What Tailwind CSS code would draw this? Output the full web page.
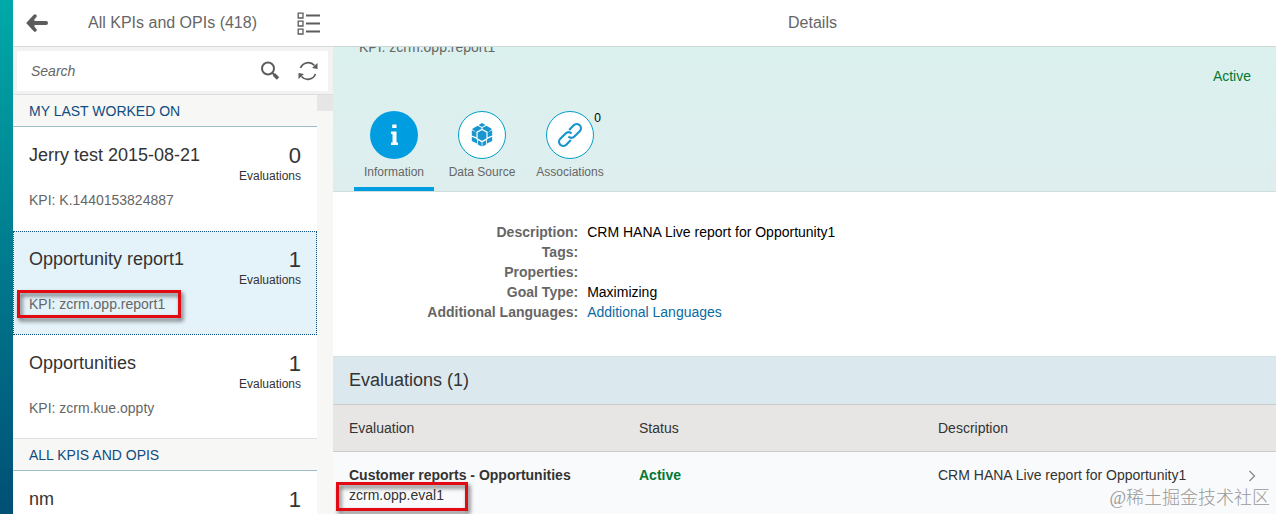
<!DOCTYPE html>
<html lang="en">
<head>
    <meta charset="UTF-8">
    <meta name="viewport" content="width=device-width, initial-scale=1.0">
    <title>KPI Workspace - Details</title>
    <script src="https://cdn.jsdelivr.net/npm/@tailwindcss/browser@4"></script>
</head>
<body class="flex h-screen overflow-hidden bg-linear-to-b from-[#00a9a8] to-[#004f75] pl-[13px] font-['Liberation_Sans',Arial,sans-serif] text-sm leading-5 text-[#333]">

    <!-- Master list -->
    <aside class="flex w-80 shrink-0 flex-col bg-[#f7f7f6]">
        <header class="flex h-[47px] shrink-0 items-center justify-between border-b border-[#d9dcdc] bg-white px-[13px] text-[#666]">
            <button type="button" aria-label="Back">
                <svg class="h-[18px] w-[22px]" viewBox="0 0 22 18" fill="none" stroke="#5c5c5c" stroke-width="4" stroke-linecap="round">
                    <path d="M4 9H20"/>
                    <path d="M9 2L2.500 9L9 16" stroke-width="3.400"/>
                    <path d="M4 9L8 5.500V12.500z" stroke-width="1" fill="#5c5c5c"/>
                </svg>
            </button>
            <h1 class="text-base">All KPIs and OPIs (418)</h1>
            <button type="button" aria-label="Group list">
                <svg class="size-[23px]" viewBox="0 0 23 23" fill="none" stroke="#5c5c5c">
                    <path d="M1.200 1.200h4.800v4.800H1.200zM1.200 9.200h4.800v4.800H1.200zM1.200 17.200h4.800v4.800H1.200z" stroke-width="1.300"/>
                    <path d="M9 3.500H23M9 11.500H23M9 19.500H23" stroke-width="1.800"/>
                </svg>
            </button>
        </header>

        <form class="border-b border-[#dcdcdc] bg-[#f2f2f2] pt-1 pr-[5px] pb-[3px] pl-1">
            <div class="flex h-10 items-center bg-white pr-[10px] pl-[14px]">
                <input type="search" aria-label="Search" placeholder="Search" class="min-w-0 flex-1 outline-none placeholder:text-[#666] placeholder:italic">
                <button type="submit" aria-label="Search">
                    <svg class="size-5" viewBox="0 0 20 20" fill="none" stroke="#5c5c5c">
                        <circle cx="8" cy="7.500" r="6" stroke-width="2"/>
                        <path d="M12.500 12L15 14.500" stroke-width="2"/>
                        <path d="M14 13.500L18 17.500" stroke-width="3.400"/>
                    </svg>
                </button>
                <button type="button" aria-label="Refresh" class="ml-[18px]">
                    <svg class="size-5" viewBox="0 0 20 20" fill="none" stroke="#5c5c5c" stroke-width="1.700">
                        <path d="M2.500 7A8.300 8.300 0 0 1 16.500 4.500M17.500 13A8.300 8.300 0 0 1 3.500 15.500"/>
                        <path d="M19.500 2V8L14 7zM.5 18V12L6 13z" fill="#5c5c5c" stroke="none"/>
                    </svg>
                </button>
            </div>
        </form>

        <div class="flex min-h-0 flex-1">
            <div class="min-w-0 flex-1 overflow-hidden">
                <h2 class="flex h-8 items-center border-b border-[#9dbccd] px-4 text-[#0f4c81]">MY LAST WORKED ON</h2>
                <ul>
                    <li class="flex h-[104px] justify-between bg-white px-4 pt-4">
                        <div>
                            <p class="text-lg leading-6">Jerry test 2015-08-21</p>
                            <p class="mt-[23px] text-[#666]">KPI: K.1440153824887</p>
                        </div>
                        <div class="text-right">
                            <p class="text-[22px] leading-[25px]">0</p>
                            <p class="text-xs leading-4">Evaluations</p>
                        </div>
                    </li>
                    <li class="flex h-[104px] justify-between border border-dotted border-[#0f4c81] bg-[#e4f2f9] px-[15px] pt-[15px]">
                        <div>
                            <p class="text-lg leading-6">Opportunity report1</p>
                            <p class="relative mt-[23px] w-fit text-[#666]">
                                KPI: zcrm.opp.report1
                                <span class="absolute -inset-y-1 -right-4 -left-3 border-3 border-[#e30b13] drop-shadow-[2px_3px_2px_rgba(0,0,0,0.6)]"></span>
                            </p>
                        </div>
                        <div class="text-right">
                            <p class="text-[22px] leading-[25px]">1</p>
                            <p class="text-xs leading-4">Evaluations</p>
                        </div>
                    </li>
                    <li class="flex h-[104px] justify-between border-b border-[#e0e0e0] bg-white px-4 pt-4">
                        <div>
                            <p class="text-lg leading-6">Opportunities</p>
                            <p class="mt-[23px] text-[#666]">KPI: zcrm.kue.oppty</p>
                        </div>
                        <div class="text-right">
                            <p class="text-[22px] leading-[25px]">1</p>
                            <p class="text-xs leading-4">Evaluations</p>
                        </div>
                    </li>
                </ul>
                <h2 class="flex h-8 items-center border-b border-[#9dbccd] px-4 text-[#0f4c81]">ALL KPIS AND OPIS</h2>
                <ul>
                    <li class="flex h-[104px] justify-between bg-white px-4 pt-4">
                        <p class="text-lg leading-6">nm</p>
                        <p class="text-[22px] leading-[25px]">1</p>
                    </li>
                </ul>
            </div>
            <!-- Scrollbar -->
            <div class="w-4 shrink-0">
                <div class="h-4 bg-[#e6e6e6]"></div>
            </div>
        </div>
    </aside>

    <!-- Detail page -->
    <main class="relative flex min-w-0 flex-1 flex-col bg-white">
        <header class="flex h-[47px] shrink-0 items-center justify-center border-b border-[#cfd6d6] pl-4 text-base text-[#666]">
            <h1>Details</h1>
        </header>

        <section class="shrink-0 overflow-hidden border-b border-[#d0dfde] bg-linear-to-b from-[#dbf1ee] to-[#deeeee]">
            <p class="-mt-[10px] pl-[26px] text-[#666]">KPI: zcrm.opp.report1</p>
            <p class="mt-[9px] pr-[25px] text-right text-[#007833]">Active</p>
            <nav class="mt-[25px] flex gap-2 pl-[21px] text-xs leading-4 text-[#666]">
                <a href="#information" class="flex w-20 flex-col items-center border-b-4 border-[#009de0] pb-[7px]">
                    <span class="flex size-12 items-center justify-center rounded-full bg-[#009de0]">
                        <svg class="size-6" viewBox="0 0 24 24" fill="#fff">
                            <path d="M10.200 1.500h4.300v3.600h-4.300zM9 8.500h5.500v11h1.500V22H9v-2.500h1.500v-8.500H9z"/>
                        </svg>
                    </span>
                    <span class="mt-[5px]">Information</span>
                </a>
                <a href="#data-source" class="flex w-20 flex-col items-center pb-[11px]">
                    <span class="flex size-12 items-center justify-center rounded-full border border-[#00a0c6] bg-white">
                        <svg class="size-6" viewBox="0 0 24 24" fill="#1a96cf">
                            <path d="M12 0l3.500 2-3.500 2-3.500-2z"/>
                            <path d="M7.500 2.800l4 2V9L6.500 10 2 6zM16.500 2.800l-4 2V9L17.500 10 22 6z"/>
                            <path d="M1.800 7.200L7 9.800V14.500L1.800 12.500zM22.200 7.200L17 9.800V14.500l5.200-2z"/>
                            <path d="M1.800 13.700L7 16v4.500L1.800 18zM22.200 13.700L17 16v4.500l5.200-2.500z"/>
                            <path d="M7.800 17l3.800 2V23.500l-3.800-2zM16.200 17l-3.800 2V23.500l3.800-2z"/>
                            <path d="M12 6.500l5 2.700v6.600L12 18.500 7 15.800V9.200z" stroke="#fff" stroke-width="1.200"/>
                        </svg>
                    </span>
                    <span class="mt-[5px]">Data Source</span>
                </a>
                <a href="#associations" class="relative flex w-20 flex-col items-center pb-[11px]">
                    <span class="flex size-12 items-center justify-center rounded-full border border-[#00a0c6] bg-white">
                        <svg class="size-6" viewBox="0 0 24 24" fill="none" stroke="#1a96cf" stroke-width="2.200">
                            <g transform="translate(12 12) rotate(-45)">
                                <path d="M-3 4.200H-9.500A4.200 4.200 0 0 1 -9.500 -4.200H-2A4.200 4.200 0 0 1 2.200 0"/>
                                <path d="M3 -4.200H9.500A4.200 4.200 0 0 1 9.500 4.200H2A4.200 4.200 0 0 1 -2.200 0"/>
                            </g>
                        </svg>
                    </span>
                    <span class="absolute top-0 right-[9px] leading-[14px] text-black">0</span>
                    <span class="mt-[5px]">Associations</span>
                </a>
            </nav>
        </section>

        <dl class="grid shrink-0 grid-cols-[26%_1fr] gap-x-[9px] pt-[30px] pb-[34px] text-black">
            <dt class="text-right font-bold text-[#666]">Description:</dt>
            <dd>CRM HANA Live report for Opportunity1</dd>
            <dt class="text-right font-bold text-[#666]">Tags:</dt>
            <dd></dd>
            <dt class="text-right font-bold text-[#666]">Properties:</dt>
            <dd></dd>
            <dt class="text-right font-bold text-[#666]">Goal Type:</dt>
            <dd>Maximizing</dd>
            <dt class="text-right font-bold text-[#666]">Additional Languages:</dt>
            <dd><a href="#languages" class="text-[#0a6aa1]">Additional Languages</a></dd>
        </dl>

        <section class="flex-1 bg-[#f9fafb]">
            <h2 class="flex h-[49px] items-center border-y border-t-[#d3e2e3] border-b-[#c8cccf] bg-[#dbe8ee] px-4 pb-px text-lg">Evaluations (1)</h2>
            <table class="w-full table-fixed text-left">
                <thead>
                    <tr class="h-[46px] border-b border-[#cccccc] bg-[#e7e6e4]">
                        <th class="w-[290px] px-4 font-normal">Evaluation</th>
                        <th class="w-[299px] px-4 font-normal">Status</th>
                        <th class="px-4 font-normal">Description</th>
                        <th class="w-12"></th>
                    </tr>
                </thead>
                <tbody>
                    <tr class="align-top">
                        <td class="px-4 pt-[13px]">
                            <p class="font-bold whitespace-nowrap">Customer reports - Opportunities</p>
                            <p class="relative w-fit">
                                zcrm.opp.eval1
                                <span class="absolute -top-[3px] -right-6 -bottom-[6px] -left-[13px] border-3 border-[#e30b13] drop-shadow-[2px_3px_2px_rgba(0,0,0,0.6)]"></span>
                            </p>
                        </td>
                        <td class="px-4 pt-[13px] font-bold text-[#007833]">Active</td>
                        <td class="px-4 pt-[13px]">CRM HANA Live report for Opportunity1</td>
                        <td class="pt-[18px] pl-5">
                            <svg class="h-3 w-2" viewBox="0 0 8 12" fill="none" stroke="#888" stroke-width="1.300">
                                <path d="M1.500 1L6.500 6L1.500 11"/>
                            </svg>
                        </td>
                    </tr>
                </tbody>
            </table>
        </section>

        <p class="absolute right-[6px] bottom-1 font-['Liberation_Serif','Noto_Sans_CJK_SC',serif] text-lg leading-6 font-light text-[#999]">@稀土掘金技术社区</p>
    </main>

</body>
</html>
